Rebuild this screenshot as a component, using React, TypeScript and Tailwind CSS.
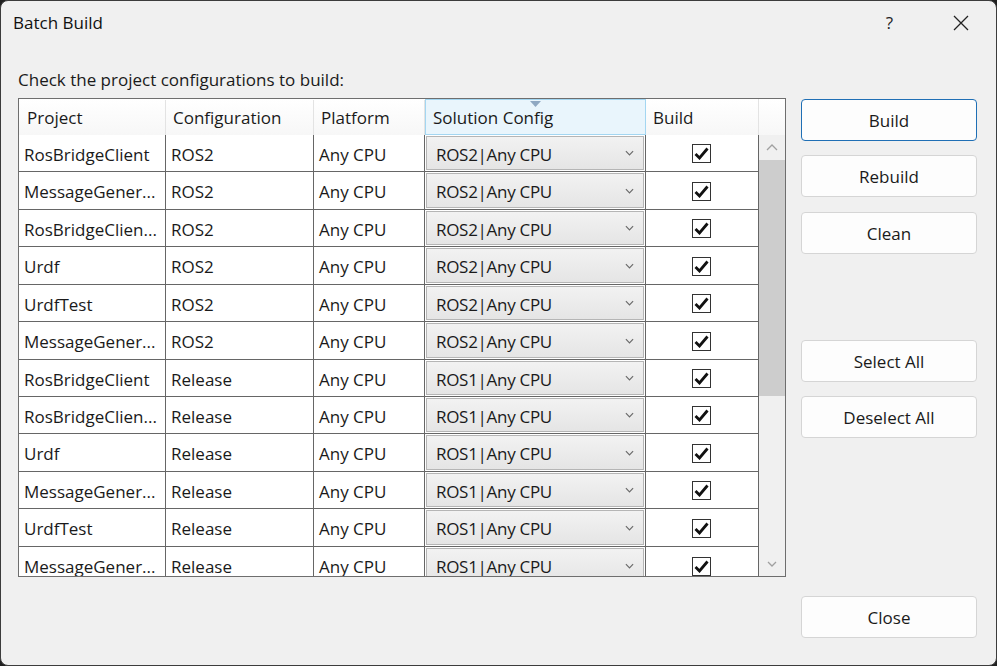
import React from "react";

const rows: [string, string, string, string][] = [
  ["RosBridgeClient", "ROS2", "Any CPU", "ROS2|Any CPU"],
  ["MessageGener...", "ROS2", "Any CPU", "ROS2|Any CPU"],
  ["RosBridgeClien...", "ROS2", "Any CPU", "ROS2|Any CPU"],
  ["Urdf", "ROS2", "Any CPU", "ROS2|Any CPU"],
  ["UrdfTest", "ROS2", "Any CPU", "ROS2|Any CPU"],
  ["MessageGener...", "ROS2", "Any CPU", "ROS2|Any CPU"],
  ["RosBridgeClient", "Release", "Any CPU", "ROS1|Any CPU"],
  ["RosBridgeClien...", "Release", "Any CPU", "ROS1|Any CPU"],
  ["Urdf", "Release", "Any CPU", "ROS1|Any CPU"],
  ["MessageGener...", "Release", "Any CPU", "ROS1|Any CPU"],
  ["UrdfTest", "Release", "Any CPU", "ROS1|Any CPU"],
  ["MessageGener...", "Release", "Any CPU", "ROS1|Any CPU"],
];

const heights = [37, 38, 37, 38, 37, 38, 37, 37, 38, 37, 38, 38];

function Check() {
  return (
    <div className="w-[19px] h-[19px] border border-[#333] bg-white flex items-center justify-center">
      <svg width="15" height="13" viewBox="0 0 15 13">
        <path d="M1.5 7 L5.5 11 L13.5 1.5" fill="none" stroke="#111" strokeWidth="2.8" strokeLinejoin="miter" />
      </svg>
    </div>
  );
}

function Chevron({ color = "#777", w = 10 }: { color?: string; w?: number }) {
  return (
    <svg width={w} height="6" viewBox="0 0 10 6">
      <path d="M1 1 L5 5 L9 1" fill="none" stroke={color} strokeWidth="1.3" />
    </svg>
  );
}

function Btn({ label, primary }: { label: string; primary?: boolean }) {
  return (
    <div
      className={
        "w-[176px] h-[42px] rounded-[4px] bg-[#fdfdfd] flex items-center justify-center text-[17px] text-[#1a1a1a] border pt-[1px] " +
        (primary ? "border-[#1f6fb5]" : "border-[#d5d5d5]")
      }
    >
      {label}
    </div>
  );
}

export default function App() {
  return (
    <div className="w-[997px] h-[666px] bg-[#202020]" style={{ fontFamily: '"Open Sans", "Noto Sans", sans-serif' }}>
      <div className="w-full h-full rounded-[8px] border border-[#3c3c3c] bg-[#f0f0f0] flex flex-col overflow-hidden">
        {/* title bar */}
        <div className="h-[44px] flex items-center pl-[12px] shrink-0">
          <div className="text-[17px] text-[#111]">Batch Build</div>
          <div className="flex-1" />
          <div className="text-[17px] text-[#222] mr-[60px]">?</div>
          <svg width="16" height="16" viewBox="0 0 16 16" className="mr-[27px]">
            <path d="M1 1 L15 15 M15 1 L1 15" stroke="#222" strokeWidth="1.3" />
          </svg>
        </div>

        <div className="flex-1 flex flex-col pl-[17px] pr-[19px]">
          <div className="h-[53px] flex items-end pb-[6px] text-[17px] text-[#1a1a1a]">
            Check the project configurations to build:
          </div>
          <div className="flex">
            {/* grid */}
            <div className="w-[768px] h-[479px] border border-[#6e6e6e] bg-white flex overflow-hidden">
              <div className="w-[739px] flex flex-col">
                {/* header */}
                <div className="h-[36px] flex shrink-0 text-[17px] text-[#1a1a1a] bg-gradient-to-b from-white to-[#f7f7f7] pt-[1px]">
                  <div className="w-[147px] border-r border-[#e3e3e3] flex items-center pl-[8px]">Project</div>
                  <div className="w-[148px] border-r border-[#e3e3e3] flex items-center pl-[7px]">Configuration</div>
                  <div className="w-[111px] border-r border-[#e3e3e3] flex items-center pl-[7px]">Platform</div>
                  <div className="relative w-[221px] bg-[#e9f5fc] border border-[#a3d6f1] mt-[-1px] flex items-center pl-[7px] pt-[1px]">
                    <svg width="11" height="6" viewBox="0 0 11 6" className="absolute top-[1px] left-[104px]">
                      <path d="M0 0 L11 0 L5.5 6 Z" fill="#8fa8c2" />
                    </svg>
                    Solution Config
                  </div>
                  <div className="w-[112px] flex items-center pl-[7px]">Build</div>
                </div>
                {/* rows */}
                <div className="flex flex-col text-[17px] text-[#1a1a1a]">
                  {rows.map((r, i) => (
                    <div
                      key={i}
                      className="flex shrink-0 border-b border-[#666]"
                      style={{ height: heights[i] }}
                    >
                      <div className="w-[147px] border-r border-[#666] flex items-center pl-[5px] pt-[3px] whitespace-nowrap overflow-hidden">
                        {r[0]}
                      </div>
                      <div className="w-[148px] border-r border-[#666] flex items-center pl-[5px] pt-[3px]">{r[1]}</div>
                      <div className="w-[111px] border-r border-[#666] flex items-center pl-[5px] pt-[3px]">{r[2]}</div>
                      <div className="w-[221px] border-r border-[#666] flex items-center px-[1px] py-[1px]">
                        <div className="w-full h-full border border-[#b5b5b5] bg-gradient-to-b from-[#f2f2f2] to-[#e5e5e5] flex items-center pl-[9px] pr-[9px]">
                          <span className="flex-1 pt-[3px] whitespace-nowrap tracking-[-0.3px]">{r[3]}</span>
                          <Chevron color="#6a6a6a" w={9} />
                        </div>
                      </div>
                      <div className="w-[111px] flex items-center justify-center pt-[1px]">
                        <Check />
                      </div>
                    </div>
                  ))}
                </div>
              </div>
              {/* scrollbar column */}
              <div className="flex-1 flex flex-col">
                <div className="h-[36px] bg-gradient-to-b from-white to-[#f7f7f7] border-l border-[#e3e3e3] shrink-0" />
                <div className="flex-1 border-l border-[#666] bg-[#f0f0f0] flex flex-col">
                  <div className="h-[25px] flex items-center justify-center">
                    <svg width="12" height="7" viewBox="0 0 12 7">
                      <path d="M1 6 L6 1 L11 6" fill="none" stroke="#a0a0a0" strokeWidth="1.3" />
                    </svg>
                  </div>
                  <div className="h-[236px] bg-[#cdcdcd]" />
                  <div className="flex-1" />
                  <div className="h-[24px] flex items-center justify-center">
                    <Chevron color="#a0a0a0" w={12} />
                  </div>
                </div>
              </div>
            </div>

            {/* buttons */}
            <div className="ml-[15px] mt-[1px] flex flex-col">
              <Btn label="Build" primary />
              <div className="h-[14px]" />
              <Btn label="Rebuild" />
              <div className="h-[15px]" />
              <Btn label="Clean" />
              <div className="h-[86px]" />
              <Btn label="Select All" />
              <div className="h-[14px]" />
              <Btn label="Deselect All" />
            </div>
          </div>
          <div className="flex justify-end mt-[19px]">
            <Btn label="Close" />
          </div>
        </div>
      </div>
    </div>
  );
}
